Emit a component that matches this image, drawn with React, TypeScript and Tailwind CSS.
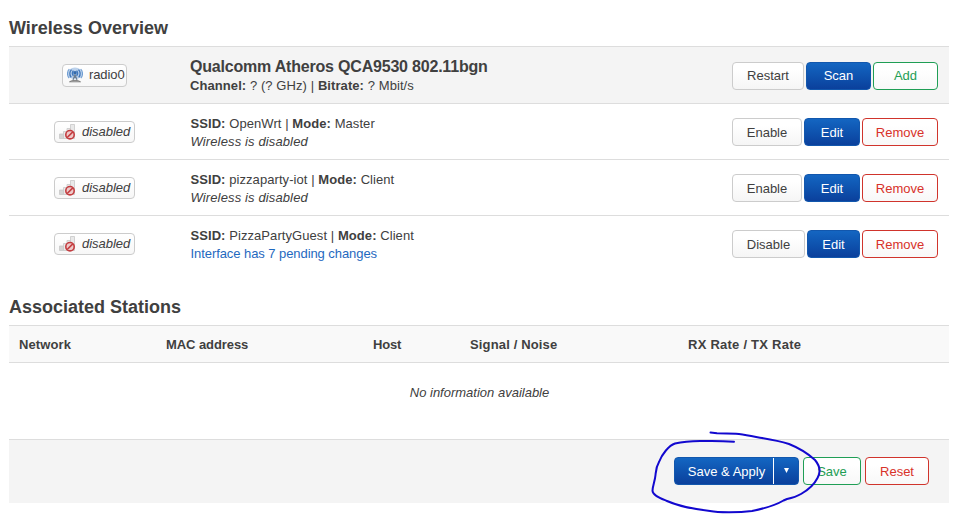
import type { ReactNode } from "react";

const tones = {
  plain: "border-[#ccc] text-[#404040] bg-linear-to-b from-white from-25% to-[#f5f5f5]",
  primary: "border-[#1257ad] text-white bg-linear-to-b from-[#1466c2] to-[#0b409c]",
  add: "border-[#1f9e55] text-[#1f9e55] bg-linear-to-b from-white from-25% to-[#f8f8f8]",
  remove: "border-[#d0342c] text-[#d8322a] bg-linear-to-b from-white from-25% to-[#f8f8f8]",
};

function Button({ tone, width, raised, children }: { tone: keyof typeof tones; width: string; raised?: boolean; children: ReactNode }) {
  return (
    <button className={`flex h-7 items-center justify-center rounded-[4px] border text-[13px] leading-[18px] whitespace-nowrap ${raised ? "" : "pt-[2px]"} ${tones[tone]} ${width}`}>
      {children}
    </button>
  );
}

function RadioIcon() {
  return (
    <svg width="16" height="16" viewBox="0 0 16 16" fill="none">
      <ellipse cx="8" cy="6.300" rx="7.300" ry="5.900" fill="#8fb4df" opacity="0.6" />
      <path d="M2.300 2C-.1 4.600-.1 8.600 2.200 11M13.700 2c2.400 2.600 2.400 6.600.1 9" stroke="#6f9dd2" strokeWidth="1.100" />
      <path d="M4.500 2.600c-2 2.200-2 5.300-.3 7.700M11.500 2.600c2 2.200 2 5.300.3 7.700" stroke="#3e75b8" strokeWidth="1.300" />
      <path d="M6.400 3.700c-1.300 1.600-1.300 3.600 0 5.200M9.600 3.700c1.300 1.600 1.300 3.600 0 5.200" stroke="#3f78bd" strokeWidth="1.300" />
      <circle cx="8" cy="5.800" r="1.700" fill="#3269ab" />
      <path d="M8 7.500 6 13M8 7.500 10 13M7 10.500h2" stroke="#6d7f92" strokeWidth="1.100" />
      <path d="M2.500 14.800c1.800-1.900 9.200-1.900 11 0z" fill="#d4d4d4" stroke="#777" strokeWidth=".9" />
    </svg>
  );
}

function SignalOffIcon() {
  return (
    <svg width="16" height="16" viewBox="0 0 16 16" fill="none">
      <g fill="#e9e9e9" stroke="#c8c8c8" strokeWidth="0.8">
        <path d="M.5 10h4v4.500h-4z" fill="#d4d4d4" />
        <path d="M4.500 7.500h3.500v7H4.500z" />
        <path d="M8 4.500h3.500v10H8z" />
        <path d="M11.500.5h4v14h-4z" />
      </g>
      <circle cx="11" cy="10.700" r="4.200" fill="#eecaca" stroke="#c43d40" strokeWidth="1.600" />
      <path d="m8.200 13.500 5.600-5.600" stroke="#c43d40" strokeWidth="1.600" />
    </svg>
  );
}

function Badge({ radio }: { radio?: boolean }) {
  return radio ? (
    <span className="mb-px flex h-[23px] w-[65px] items-center rounded-[4px] border border-[#ccc] bg-linear-to-b from-white to-[#f7f7f7] pl-1">
      <RadioIcon />
      <span className="ml-1.5 tracking-[-0.1px]">radio0</span>
    </span>
  ) : (
    <span className="flex h-[22px] w-[81px] items-center rounded-[4px] border border-[#ccc] bg-linear-to-b from-white to-[#f7f7f7] pl-1">
      <SignalOffIcon />
      <em className="ml-[7px] tracking-[-0.04px]">disabled</em>
    </span>
  );
}

function Row({ radio, actions, children }: { radio?: boolean; actions: ReactNode; children: ReactNode }) {
  return (
    <div className={`flex items-center border-t border-[#ddd] pr-[11px] ${radio ? "h-[57px] bg-[#f4f4f4] pt-px" : "h-14"}`}>
      <div className="flex w-[171px] justify-center">
        <Badge radio={radio} />
      </div>
      <div className={`flex-1 leading-[18px] whitespace-nowrap ${radio ? "pl-[10px]" : "pt-[2px] pl-[10.500px]"}`}>{children}</div>
      <div className="flex gap-0.5">{actions}</div>
    </div>
  );
}

function Network({ ssid, mode }: { ssid: string; mode: string }) {
  return (
    <div className="tracking-[0.07px]">
      <b>SSID:</b> {ssid} | <b>Mode:</b> {mode}
    </div>
  );
}

export default function App() {
  return (
    <main className="relative h-[521px] w-[957px] overflow-hidden bg-white pr-2 pl-[9px] font-['Liberation_Sans',Arial,sans-serif] text-[13px] leading-[18px] text-[#404040]">
      <h3 className="h-[46px] pt-[10px] text-[18px] leading-9 font-bold">Wireless Overview</h3>
      <section>
        <Row
          radio
          actions={
            <>
              <Button tone="plain" width="w-[72px]" raised>Restart</Button>
              <Button tone="primary" width="w-[65px]" raised>Scan</Button>
              <Button tone="add" width="w-[65px]" raised>Add</Button>
            </>
          }
        >
          <div className="text-base leading-5 font-bold tracking-[-0.2px]">Qualcomm Atheros QCA9530 802.11bgn</div>
          <div className="tracking-[0.08px]"><b>Channel:</b> ? (? GHz) | <b>Bitrate:</b> ? Mbit/s</div>
        </Row>
        <Row
          actions={
            <>
              <Button tone="plain" width="w-[70px]">Enable</Button>
              <Button tone="primary" width="w-14">Edit</Button>
              <Button tone="remove" width="w-[76px]">Remove</Button>
            </>
          }
        >
          <Network ssid="OpenWrt" mode="Master" />
          <em className="block tracking-[0.13px]">Wireless is disabled</em>
        </Row>
        <Row
          actions={
            <>
              <Button tone="plain" width="w-[70px]">Enable</Button>
              <Button tone="primary" width="w-14">Edit</Button>
              <Button tone="remove" width="w-[76px]">Remove</Button>
            </>
          }
        >
          <Network ssid="pizzaparty-iot" mode="Client" />
          <em className="block tracking-[0.13px]">Wireless is disabled</em>
        </Row>
        <Row
          actions={
            <>
              <Button tone="plain" width="w-[73px]">Disable</Button>
              <Button tone="primary" width="w-[53px]">Edit</Button>
              <Button tone="remove" width="w-[76px]">Remove</Button>
            </>
          }
        >
          <Network ssid="PizzaPartyGuest" mode="Client" />
          <a className="block tracking-[-0.07px] text-[#1f69c0]">Interface has 7 pending changes</a>
        </Row>
      </section>

      <h3 className="h-[54px] pt-[18px] text-[18px] leading-9 font-bold">Associated Stations</h3>
      <section>
        <div className="flex h-[38px] items-center border-y border-[#ddd] bg-[#f9f9f9] pt-0.5 pl-2.5 font-bold">
          <span className="w-[147px] tracking-[0.1px]">Network</span>
          <span className="w-[207px] tracking-[-0.08px]">MAC address</span>
          <span className="w-[97px] tracking-[-0.2px]">Host</span>
          <span className="w-[218px] tracking-[0.15px]">Signal / Noise</span>
          <span className="tracking-[0.24px]">RX Rate / TX Rate</span>
        </div>
        <div className="flex h-[76px] items-center justify-center pb-4 pl-px">
          <em>No information available</em>
        </div>
      </section>

      <footer className="flex h-16 items-center justify-end border-t border-[#ddd] bg-[#f4f4f4] pr-5 pb-[2px]">
        <div className="mr-1 flex h-7 w-[125px] overflow-hidden rounded-[4px] border border-[#1257ad] bg-linear-to-b from-[#1466c2] to-[#0b409c] text-white">
          <button className="flex flex-1 items-center justify-center border-r border-white pt-[2px] pl-[5px]">Save &amp; Apply</button>
          <button className="flex w-[24px] items-center justify-center">
            <svg width="5" height="5" viewBox="0 0 5 5"><path d="M0 0h5L2.500 5z" fill="white" /></svg>
          </button>
        </div>
        <div className="flex gap-1">
          <Button tone="add" width="w-[58px]">Save</Button>
          <Button tone="remove" width="w-16">Reset</Button>
        </div>
      </footer>

      <svg className="pointer-events-none absolute top-[420px] left-[640px]" width="200" height="101" viewBox="640 420 200 101" fill="none">
        <path
          d="M710.500 432.500 L717 433.300 L736 433.800 C744 434.300 750 436 760 437.700 C770 439.300 781 441.500 789 444 C799 448 808 453.500 815 460 C820 466 821 472 817.500 478 C814 485 808 490 801 494 C796 497 792 498 787 499 L783.500 500.500 C776 505 764 508.500 752 511 C739 512.500 719 512.700 710 511 C693 509 677 505.500 667 501 C660 498 653 495.500 652.500 491 C652.500 486 655 481 655.500 475 C656 470 656 467 659 462 C662 454 669 445.500 675 443.500 C683 441.500 693 440.700 705 441 C716 440.800 724 441 734 441.700"
          stroke="#1208cf"
          strokeWidth="2"
          strokeLinecap="round"
          strokeLinejoin="round"
        />
      </svg>
    </main>
  );
}
